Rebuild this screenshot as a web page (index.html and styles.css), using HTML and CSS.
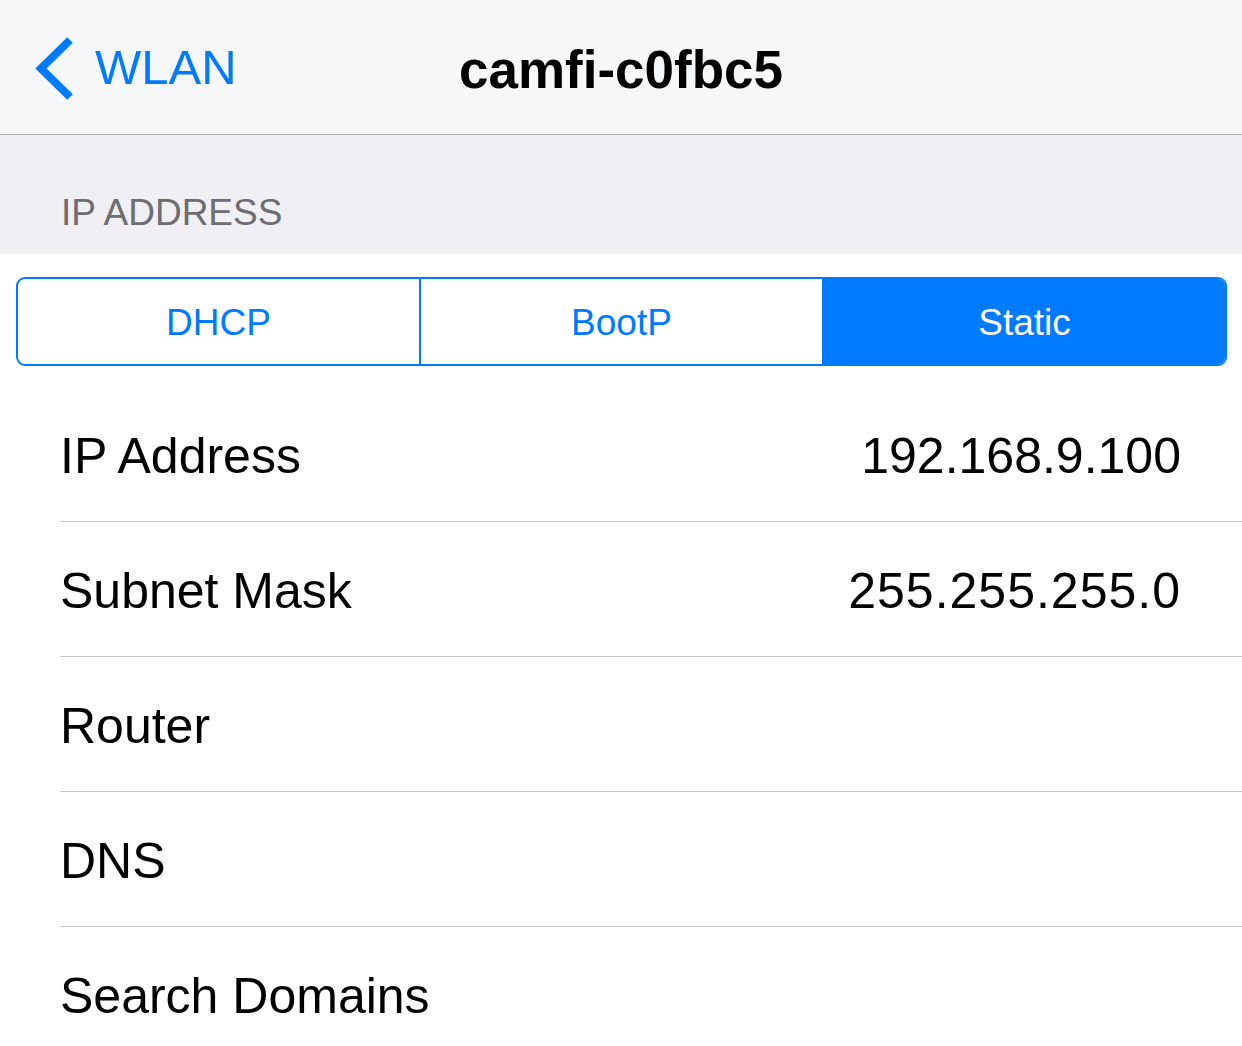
FILE: index.html
```
<!doctype html>
<html lang="en">
    <head>
        <meta charset="utf-8">
        <meta name="viewport" content="width=device-width, initial-scale=1">
        <title>camfi-c0fbc5</title>
        <link rel="stylesheet" href="styles.css">
    </head>
    <body>
        <div class="navbar">
            <a class="back" href="#">
                <svg class="chevron" width="40" height="64" viewBox="0 0 40 64"><polyline points="35,4 6,32.5 35,61" fill="none" stroke="#007aff" stroke-width="8" stroke-miterlimit="10"/></svg>
                <span>WLAN</span>
            </a>
            <div class="title">camfi-c0fbc5</div>
            <div></div>
        </div>
        <div class="section-header">IP ADDRESS</div>
        <div class="segment-wrap">
            <div class="segments">
                <div class="seg">DHCP</div>
                <div class="seg">BootP</div>
                <div class="seg active">Static</div>
            </div>
        </div>
        <div class="list">
            <div class="row"><span>IP Address</span><span class="value">192.168.9.100</span></div>
            <div class="row"><span>Subnet Mask</span><span class="value wide">255.255.255.0</span></div>
            <div class="row"><span>Router</span><span class="value"></span></div>
            <div class="row"><span>DNS</span><span class="value"></span></div>
            <div class="row"><span>Search Domains</span><span class="value"></span></div>
        </div>
    </body>
</html>
```
FILE: styles.css
```
html, body { margin: 0; padding: 0; }
body { background: #fff; font-family: "Liberation Sans", Arial, sans-serif; color: #000; overflow: hidden; }

.navbar { height: 134px; background: #f6f7f9; border-bottom: 1px solid #a9a9ab; display: grid; grid-template-columns: 1fr auto 1fr; align-items: center; }
.navbar .back { display: flex; align-items: center; padding-left: 35px; color: #007aff; text-decoration: none; font-size: 49px; }
.navbar .back .chevron { margin-right: 20px; margin-top: 2px; }
.navbar .title { font-size: 53px; font-weight: bold; padding-top: 4px; }

.section-header { background: #efeff4; color: #6d6d72; font-size: 37px; line-height: 37px; height: 38px; padding: 59px 0 22px 61px; }

.segment-wrap { padding: 23px 15px 21px 16px; }
.segments { display: flex; height: 85px; border: 2px solid #007aff; border-radius: 9px; overflow: hidden; }
.seg { flex: 1; display: flex; align-items: center; justify-content: center; color: #007aff; font-size: 37px; padding-top: 2px; }
.seg + .seg { border-left: 2px solid #007aff; }
.seg.active { background: #007aff; color: #fff; }

.list { margin-left: 60px; }
.row { height: 131px; padding-top: 3px; border-bottom: 1px solid #c8c7cc; display: flex; align-items: center; justify-content: space-between; padding-right: 61px; font-size: 50px; }
.row:last-child { border-bottom: 0; }
.row .value.wide { letter-spacing: 1px; }
```
